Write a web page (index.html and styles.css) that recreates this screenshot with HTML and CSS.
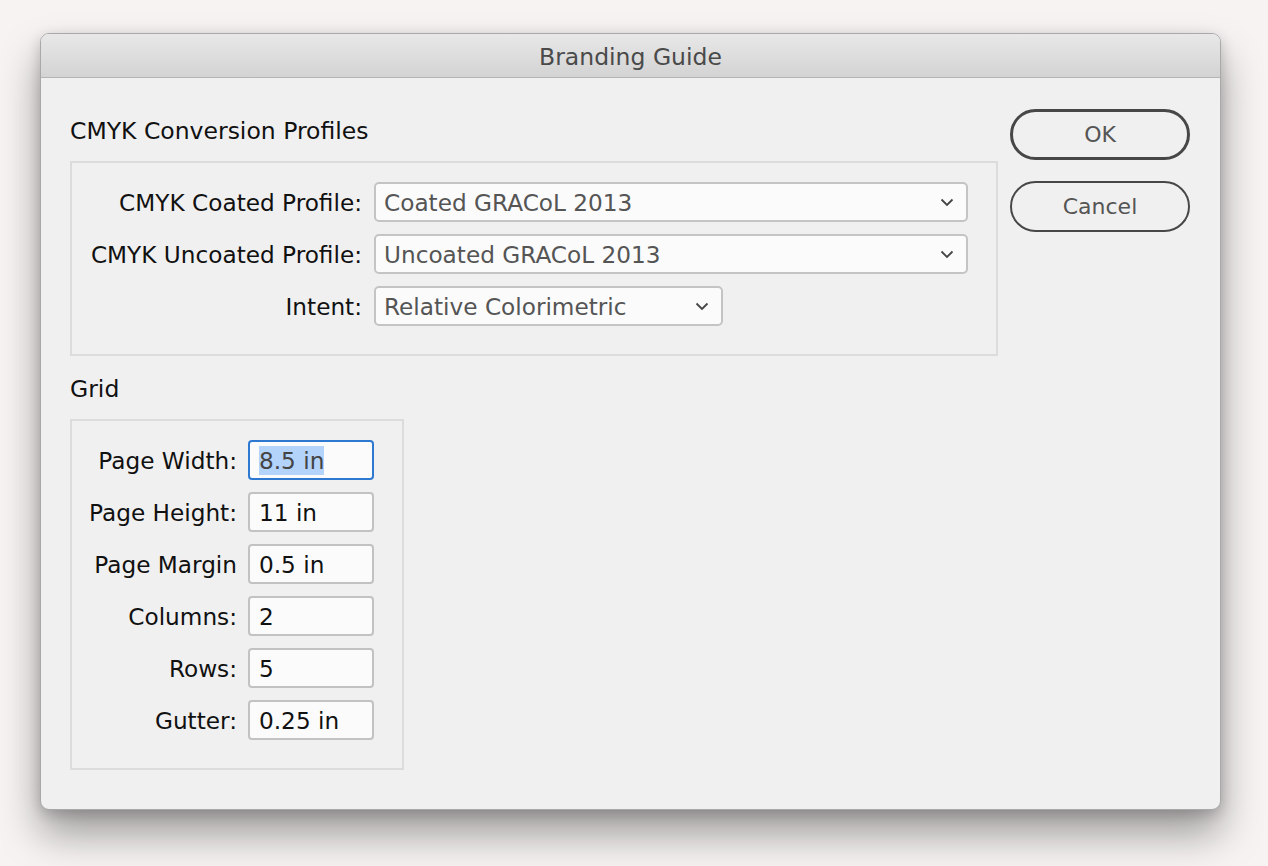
FILE: index.html
```html
<!DOCTYPE html>
<html lang="en">
<head>
  <meta charset="UTF-8">
  <title>Branding Guide</title>
  <link rel="stylesheet" href="styles.css">
</head>
<body>
  <div class="dialog">
    <div class="title-bar">Branding Guide</div>
    <div class="dialog-body">
      <div class="main-col">
        <h3 class="section-title">CMYK Conversion Profiles</h3>
        <div class="group profiles">
          <label class="row-label">CMYK Coated Profile:</label>
          <div class="select wide">
            <span>Coated GRACoL 2013</span>
            <svg class="chevron" viewBox="0 0 14 9"><path d="M1.5 1.5 L7 7 L12.5 1.5" /></svg>
          </div>
          <label class="row-label">CMYK Uncoated Profile:</label>
          <div class="select wide">
            <span>Uncoated GRACoL 2013</span>
            <svg class="chevron" viewBox="0 0 14 9"><path d="M1.5 1.5 L7 7 L12.5 1.5" /></svg>
          </div>
          <label class="row-label">Intent:</label>
          <div class="select narrow">
            <span>Relative Colorimetric</span>
            <svg class="chevron" viewBox="0 0 14 9"><path d="M1.5 1.5 L7 7 L12.5 1.5" /></svg>
          </div>
        </div>

        <h3 class="section-title">Grid</h3>
        <div class="group grid-box">
          <label class="row-label">Page Width:</label>
          <div class="field focused"><span class="selected">8.5 in</span></div>
          <label class="row-label">Page Height:</label>
          <div class="field">11 in</div>
          <label class="row-label">Page Margin</label>
          <div class="field">0.5 in</div>
          <label class="row-label">Columns:</label>
          <div class="field">2</div>
          <label class="row-label">Rows:</label>
          <div class="field">5</div>
          <label class="row-label">Gutter:</label>
          <div class="field">0.25 in</div>
        </div>
      </div>

      <div class="button-col">
        <button class="btn btn-default">OK</button>
        <button class="btn">Cancel</button>
      </div>
    </div>
  </div>
</body>
</html>
```

FILE: styles.css
```css
* {
  margin: 0;
  padding: 0;
  box-sizing: border-box;
  font-family: 'DejaVu Sans', Verdana, sans-serif;
}

body {
  background-color: #f6f3f2;
  height: 100vh;
  overflow: hidden;
  padding: 33px 0 0 40px;
}

.dialog {
  width: 1181px;
  height: 777px;
  background-color: #f0f0f0;
  border-radius: 9px;
  border: 1px solid #a9a9a9;
  box-shadow: 0 24px 40px rgba(0, 0, 0, 0.36), 0 4px 14px rgba(0, 0, 0, 0.18);
  overflow: hidden;
}

.title-bar {
  height: 44px;
  line-height: 46px;
  text-align: center;
  font-size: 23.5px;
  color: #4a4a4a;
  background: linear-gradient(#e8e8e8, #d3d3d3);
  border-bottom: 1px solid #b4b4b4;
}

.dialog-body {
  display: flex;
  gap: 12px;
  padding: 0 29px;
}

.main-col {
  width: 928px;
}

.section-title {
  font-weight: normal;
  font-size: 23.5px;
  line-height: 26px;
  color: #111;
  margin-top: 40px;
  margin-bottom: 17px;
}

.main-col .section-title + .group + .section-title {
  margin-top: 20px;
}

.group {
  border: 2px solid #dcdcdc;
  display: grid;
  row-gap: 12px;
  column-gap: 12px;
  align-items: center;
  padding: 19px 0 28px 0;
}

.profiles {
  grid-template-columns: 290px auto;
}

.grid-box {
  width: 334px;
  grid-template-columns: 165px 126px;
  column-gap: 11px;
}

.row-label {
  text-align: right;
  font-size: 23.2px;
  color: #111;
  white-space: nowrap;
}

.select {
  height: 40px;
  display: flex;
  align-items: center;
  justify-content: space-between;
  padding: 0 12px 0 8px;
  background-color: #fbfbfb;
  border: 2px solid #c4c4c4;
  border-radius: 5px;
  font-size: 23.2px;
  color: #555;
}

.select.wide {
  width: 594px;
}

.select.narrow {
  width: 349px;
}

.chevron {
  width: 14px;
  height: 9px;
  fill: none;
  stroke: #444;
  stroke-width: 1.8;
}

.field {
  height: 40px;
  display: flex;
  align-items: center;
  padding: 0 9px;
  background-color: #fbfbfb;
  border: 2px solid #c2c2c2;
  border-radius: 4px;
  font-size: 23.2px;
  color: #111;
}

.field.focused {
  border-color: #2e78d2;
}

.selected {
  background-color: #b3d3fb;
  color: #444;
  line-height: 29px;
}

.button-col {
  display: flex;
  flex-direction: column;
  gap: 21px;
  padding-top: 31px;
}

.btn {
  width: 180px;
  height: 51px;
  border-radius: 26px;
  border: 2px solid #474747;
  background-color: #f0f0f0;
  color: #555;
  font-size: 22px;
}

.btn-default {
  border-width: 3px;
}
```
